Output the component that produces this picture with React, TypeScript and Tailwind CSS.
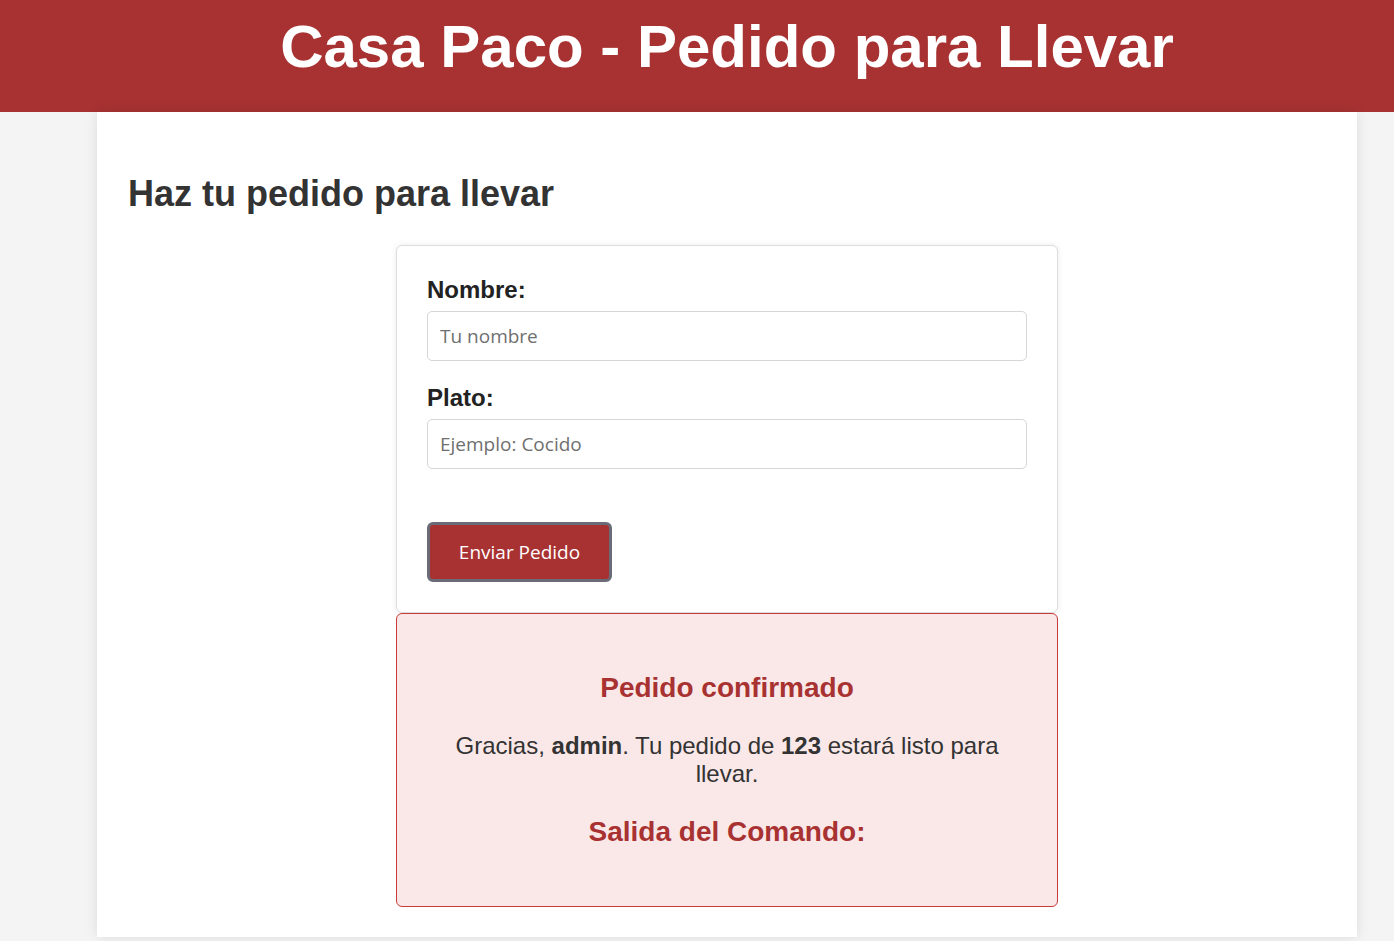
import React from "react";

export default function App() {
  const sans = { fontFamily: '"Liberation Sans", Arial, sans-serif' };
  return (
    <div
      className="min-h-[941px] bg-[#f4f4f4] text-[#333]"
      style={sans}
    >
      <header className="h-[112px] bg-[#a83232] text-white">
        <div className="ml-[97px] w-[1260px] pt-[12px] text-center">
          <h1 className="text-[60px] font-bold leading-[69px]">
            Casa Paco - Pedido para Llevar
          </h1>
        </div>
      </header>
      <main className="ml-[97px] w-[1260px] bg-white px-[31px] pb-[30px] pt-[30px] shadow-[0_0_12px_rgba(0,0,0,0.1)]">
        <h2 className="mt-[31px] mb-[31px] text-[36px] font-bold leading-[41px] text-[#333]">
          Haz tu pedido para llevar
        </h2>
        <form
          className="mx-auto w-[662px] rounded-[6px] border border-[#ddd] bg-white p-[30px] shadow-[0_0_6px_rgba(0,0,0,0.08)]"
          onSubmit={(e) => e.preventDefault()}
        >
          <label className="block text-[24px] font-bold leading-[28px] text-[#222]">
            Nombre:
          </label>
          <input
            className="mt-[7px] block h-[50px] w-[600px] rounded-[5px] border border-[#d6d6d6] px-[12px] text-[19px] text-[#333] outline-none placeholder:text-[#6f6f6f]"
            style={{ fontFamily: '"Open Sans", sans-serif' }}
            placeholder="Tu nombre"
          />
          <label className="mt-[23px] block text-[24px] font-bold leading-[28px] text-[#222]">
            Plato:
          </label>
          <input
            className="mt-[7px] block h-[50px] w-[600px] rounded-[5px] border border-[#d6d6d6] px-[12px] text-[19px] text-[#333] outline-none placeholder:text-[#6f6f6f]"
            style={{ fontFamily: '"Open Sans", sans-serif' }}
            placeholder="Ejemplo: Cocido"
          />
          <button
            type="submit"
            className="mt-[53px] flex h-[60px] w-[185px] items-center justify-center rounded-[6px] border-[3px] border-[#6b6b78] bg-[#a83232] text-[19px] text-white"
            style={{ fontFamily: '"Open Sans", sans-serif' }}
          >
            Enviar Pedido
          </button>
        </form>
        <div className="mx-auto w-[662px] rounded-[6px] border border-[#c93a3a] bg-[#fae8e8] px-[30px] py-[30px] text-center">
          <h3 className="mt-[28px] text-[28px] font-bold leading-[32px] text-[#a83232]">
            Pedido confirmado
          </h3>
          <p className="mt-[28px] text-[24px] leading-[28px] text-[#333]">
            Gracias, <strong>admin</strong>. Tu pedido de <strong>123</strong>{" "}
            estará listo para llevar.
          </p>
          <h3 className="mt-[28px] mb-[28px] text-[28px] font-bold leading-[32px] text-[#a83232]">
            Salida del Comando:
          </h3>
        </div>
      </main>
    </div>
  );
}
